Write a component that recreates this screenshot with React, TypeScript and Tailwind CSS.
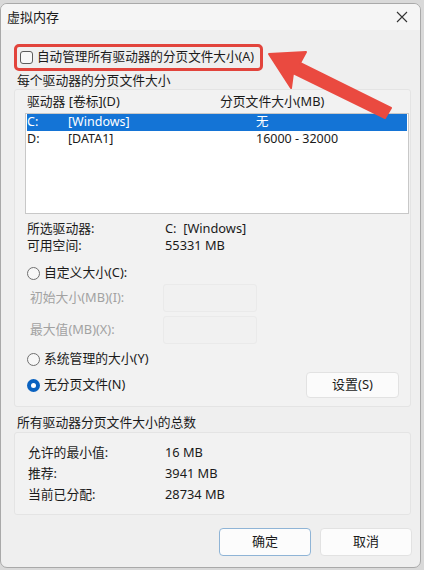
import React from "react";

const font = { fontFamily: '"Noto Sans", "Noto Sans CJK SC", sans-serif' };

function Radio({ checked }: { checked?: boolean }) {
  if (checked) {
    return (
      <span className="w-[13px] h-[13px] rounded-full bg-[#0a62c0] flex items-center justify-center shrink-0">
        <span className="w-[5px] h-[5px] rounded-full bg-white" />
      </span>
    );
  }
  return <span className="w-[13px] h-[13px] rounded-full border border-[#707070] bg-[#f7f7f7] shrink-0" />;
}

export default function App() {
  return (
    <div className="w-[424px] h-[570px] bg-[#d9d9d9] pt-[3px] relative text-[12.8px] text-[#1b1b1b]" style={font}>
      <div className="w-[421px] h-[565px] bg-[#efefef] border border-[#a9a9a9] rounded-[7px] overflow-hidden flex flex-col">
        {/* title bar */}
        <div className="h-[26px] shrink-0 flex items-center justify-between pl-[6px] pr-[10px] bg-[#f5f5f5]">
          <span className="text-[13px] leading-none">虚拟内存</span>
          <svg width="12" height="12" viewBox="0 0 12 12" className="mr-[2px]">
            <path d="M1 1 L11 11 M11 1 L1 11" stroke="#333" strokeWidth="1.1" fill="none" />
          </svg>
        </div>
        {/* body */}
        <div className="flex flex-col pl-[13px] pr-[9px]">
          <div className="mt-[14px] h-[27px] w-[249px] border-[3px] border-[#e2443c] rounded-[5px] flex items-center pl-[3px] gap-[4px]">
            <span className="w-[13px] h-[13px] border border-[#5c5c5c] rounded-[3px] bg-[#f8f8f8] shrink-0" />
            <span className="leading-none whitespace-nowrap text-[12.6px]">自动管理所有驱动器的分页文件大小(A)</span>
          </div>
          <div className="h-[18px] leading-[18px] pl-[3px] whitespace-nowrap">每个驱动器的分页文件大小</div>
          {/* panel 1 */}
          <div className="h-[318px] border border-[#e4e4e4] rounded-[3px] bg-[#f2f2f2] pl-[10px] pr-[1px] flex flex-col">
            <div className="pt-[3px] h-[19px] flex items-center pl-[2px] whitespace-nowrap leading-none">
              <span className="w-[193px]">驱动器 [卷标](D)</span>
              <span>分页文件大小(MB)</span>
            </div>
            <div className="mt-[4px] h-[101px] bg-white border border-[#c8c8c8] px-[1px] flex flex-col text-[12.5px]">
              <div className="h-[17px] bg-[#1474d6] text-white flex items-center whitespace-nowrap leading-none">
                <span className="w-[41px]">C:</span>
                <span className="w-[188px]">[Windows]</span>
                <span>无</span>
              </div>
              <div className="h-[17px] flex items-center whitespace-nowrap leading-none">
                <span className="w-[41px]">D:</span>
                <span className="w-[188px]">[DATA1]</span>
                <span>16000 - 32000</span>
              </div>
            </div>
            <div className="mt-[6px] flex flex-col pl-[2px]">
              <div className="h-[17px] flex items-center whitespace-nowrap leading-none">
                <span className="w-[138px]">所选驱动器:</span>
                <span>C:&nbsp;&nbsp;[Windows]</span>
              </div>
              <div className="h-[17px] flex items-center whitespace-nowrap leading-none">
                <span className="w-[138px]">可用空间:</span>
                <span>55331 MB</span>
              </div>
            </div>
            <div className="mt-[10px] h-[18px] flex items-center gap-[4px] pl-[2px] whitespace-nowrap">
              <Radio />
              <span>自定义大小(C):</span>
            </div>
            <div className="mt-[2px] h-[28px] flex items-center pl-[5px] text-[#a2a2a2] whitespace-nowrap">
              <span className="w-[133px]">初始大小(MB)(I):</span>
              <span className="w-[94px] h-[28px] border border-[#eaeaea] bg-[#f1f1f1] rounded-[3px]" />
            </div>
            <div className="mt-[4px] h-[28px] flex items-center pl-[5px] text-[#a2a2a2] whitespace-nowrap">
              <span className="w-[133px]">最大值(MB)(X):</span>
              <span className="w-[94px] h-[28px] border border-[#eaeaea] bg-[#f1f1f1] rounded-[3px]" />
            </div>
            <div className="mt-[6px] h-[18px] flex items-center gap-[4px] pl-[2px] whitespace-nowrap">
              <Radio />
              <span>系统管理的大小(Y)</span>
            </div>
            <div className="mt-[4px] h-[26px] flex items-center pl-[2px] pr-[10px] whitespace-nowrap">
              <div className="flex items-center gap-[4px]">
                <Radio checked />
                <span>无分页文件(N)</span>
              </div>
              <button className="ml-auto w-[93px] h-[26px] bg-[#fbfbfb] border border-[#e2e2e2] rounded-[4px] text-[13px]">设置(S)</button>
            </div>
          </div>
          <div className="h-[25px] pt-[6px] leading-[18px] pl-[3px] whitespace-nowrap">所有驱动器分页文件大小的总数</div>
          {/* panel 2 */}
          <div className="h-[83px] border border-[#e4e4e4] rounded-[3px] bg-[#f2f2f2] pt-[9px] pl-[13px] flex flex-col">
            <div className="h-[21px] flex items-center whitespace-nowrap">
              <span className="w-[137px]">允许的最小值:</span>
              <span>16 MB</span>
            </div>
            <div className="h-[21px] flex items-center whitespace-nowrap">
              <span className="w-[137px]">推荐:</span>
              <span>3941 MB</span>
            </div>
            <div className="h-[21px] flex items-center whitespace-nowrap">
              <span className="w-[137px]">当前已分配:</span>
              <span>28734 MB</span>
            </div>
          </div>
          <div className="mt-[13px] flex justify-end gap-[9px] mr-[-1px]">
            <button className="w-[92px] h-[28px] bg-[#fcfcfc] border border-[#8fb4d6] rounded-[4px] text-[13px]">确定</button>
            <button className="w-[92px] h-[28px] bg-[#fcfcfc] border border-[#e2e2e2] rounded-[4px] text-[13px]">取消</button>
          </div>
        </div>
      </div>
      {/* annotation arrow overlay */}
      <svg className="absolute left-0 top-0 pointer-events-none" width="424" height="570" viewBox="0 0 424 570">
        <polygon
          points="269,54 306,52 300,63 391,108 385,118 293,73 291,88"
          fill="#ea4a40"
          stroke="#ea4a40"
          strokeWidth="2"
          strokeLinejoin="round"
        />
      </svg>
    </div>
  );
}
